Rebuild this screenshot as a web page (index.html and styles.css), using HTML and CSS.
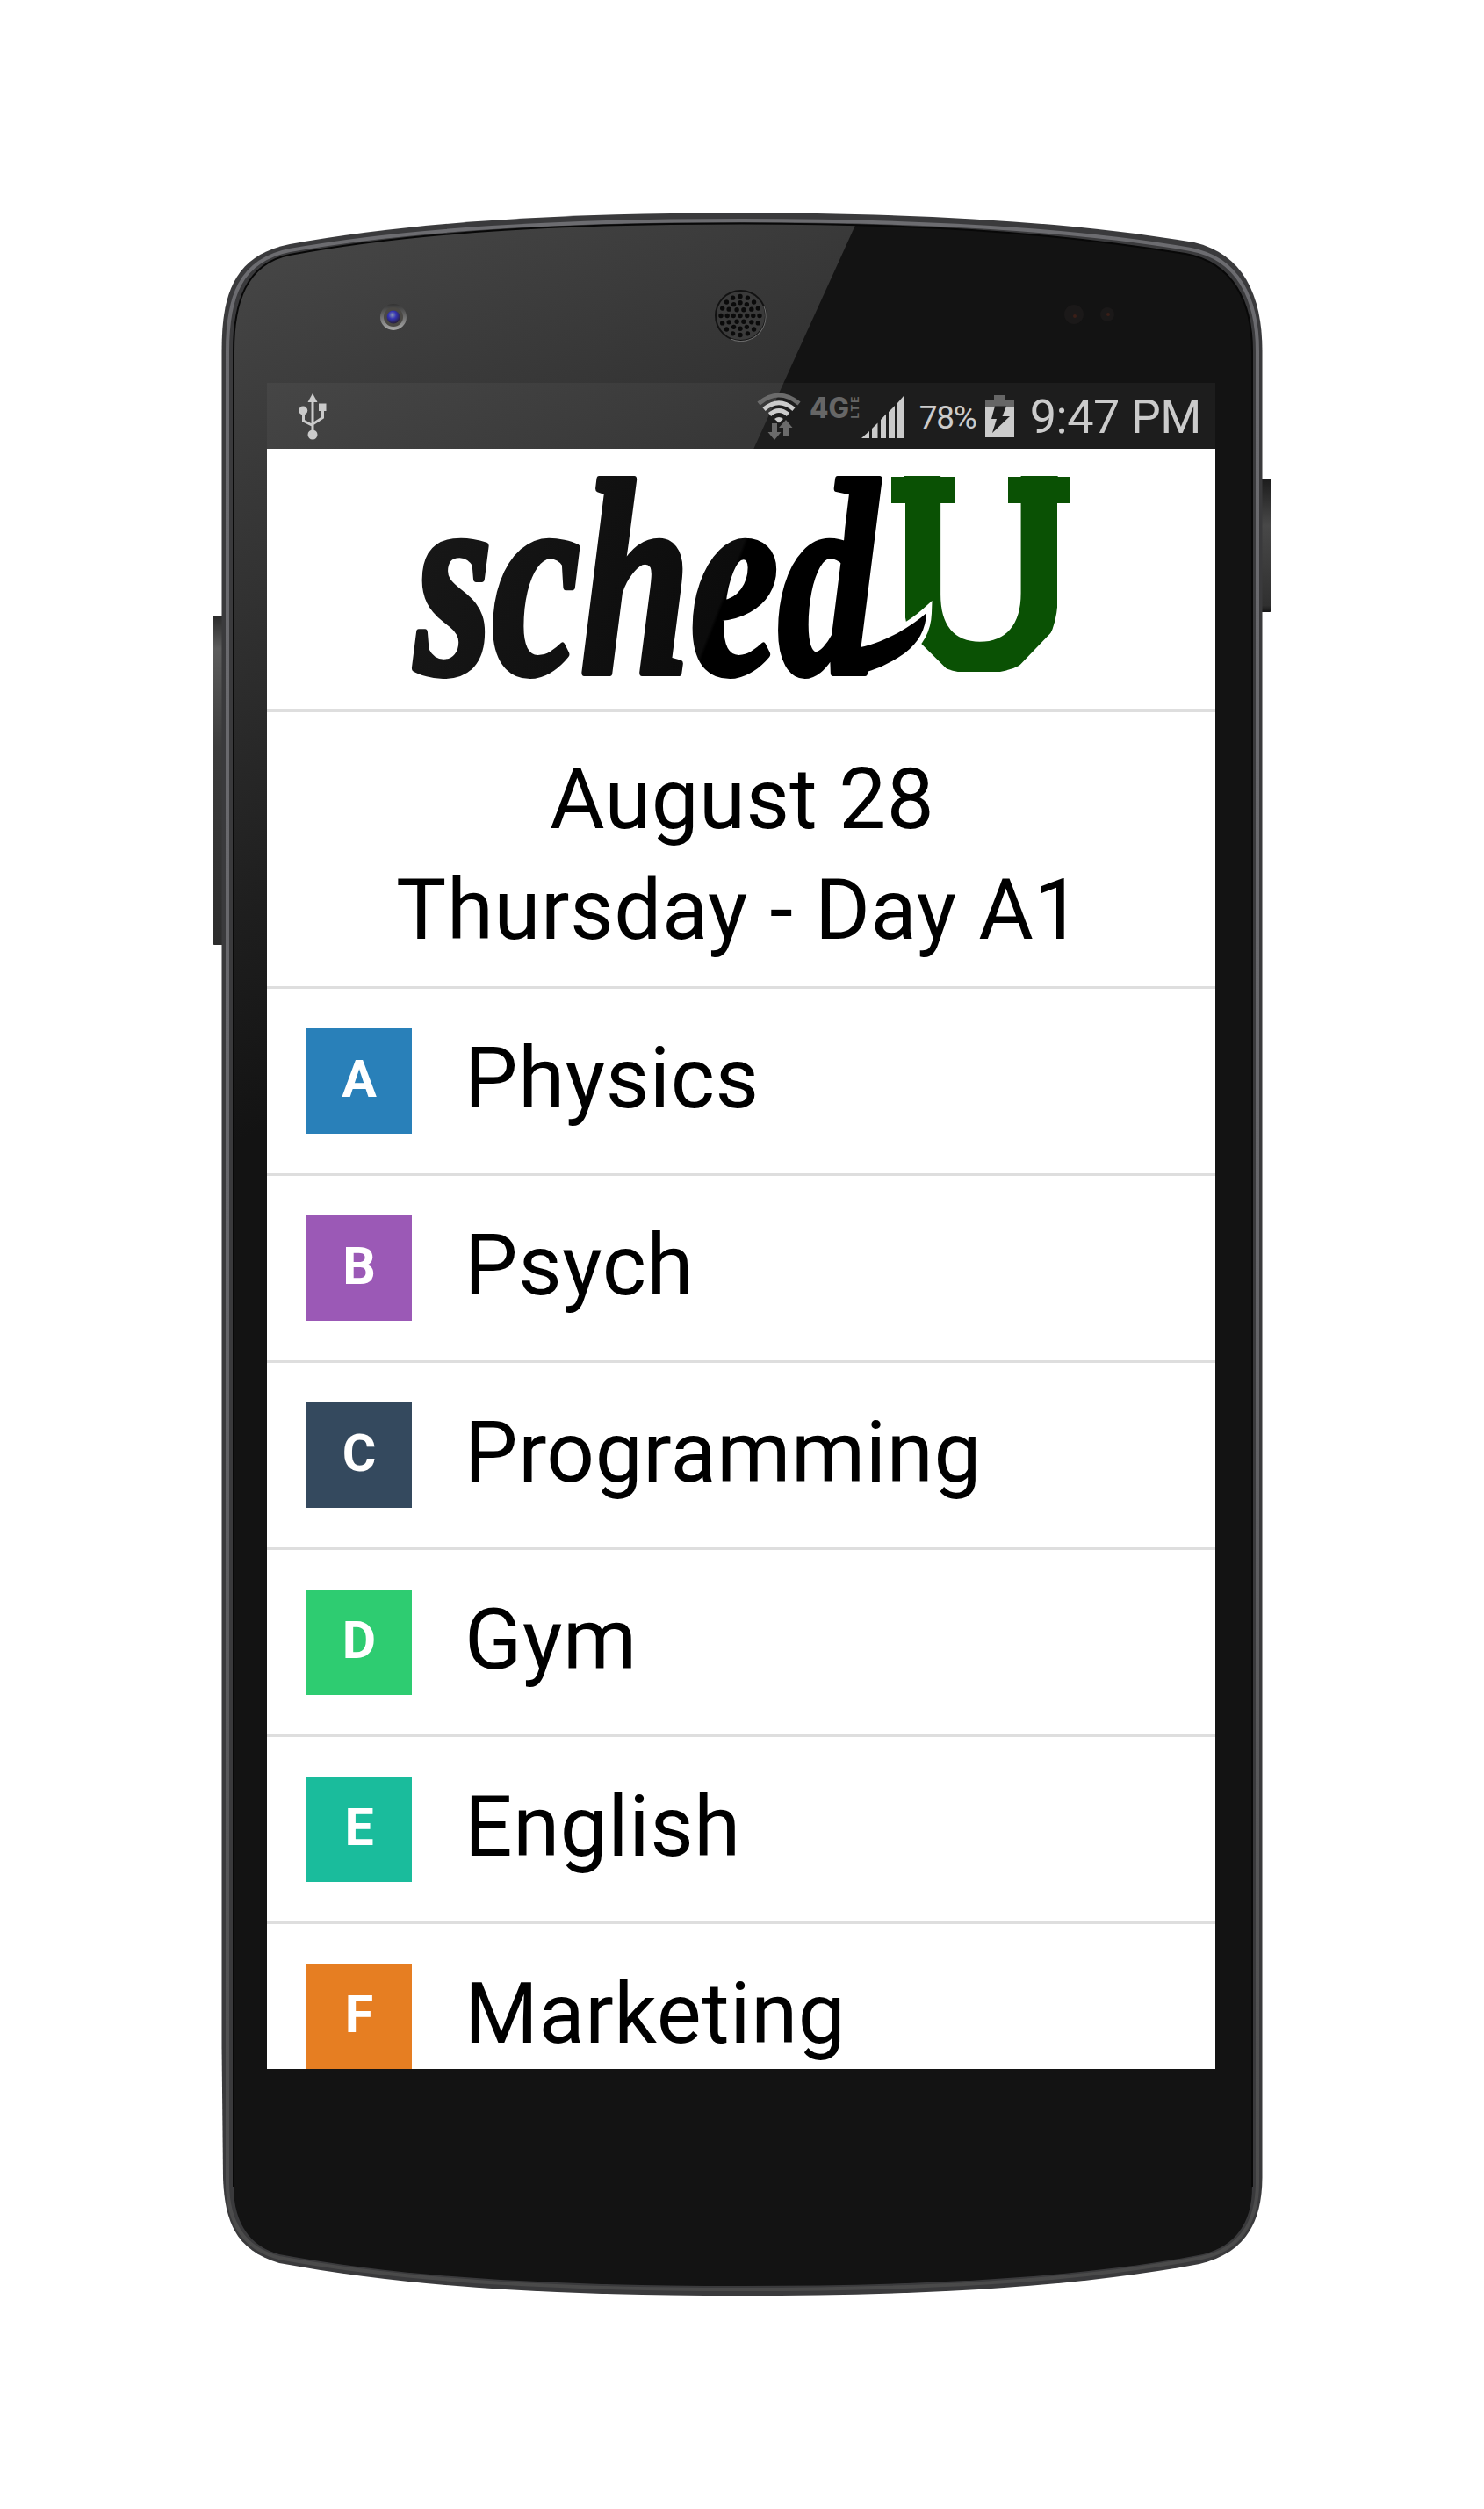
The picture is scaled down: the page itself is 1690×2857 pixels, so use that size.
FILE: index.html
```
<!DOCTYPE html>
<html lang="en">
<head>
<meta charset="utf-8">
<title>schedU</title>
<link rel="stylesheet" href="styles.css">
</head>
<body>
<main class="phone">
  <svg class="shell" viewBox="0 0 1690 2857" aria-hidden="true">
    <defs>
      <linearGradient id="glare" gradientUnits="userSpaceOnUse" x1="290" y1="280" x2="640" y2="1150">
        <stop offset="0" stop-color="#464646"/><stop offset=".35" stop-color="#343434"/><stop offset=".75" stop-color="#1e1e1e"/><stop offset="1" stop-color="#131313"/>
      </linearGradient>
      <linearGradient id="rim" x1="0" y1="0" x2="0" y2="1"><stop offset="0" stop-color="#6c6c70"/><stop offset=".5" stop-color="#66666a"/><stop offset="1" stop-color="#4a4a4a"/></linearGradient>
      <linearGradient id="key" x1="0" y1="0" x2="0" y2="1"><stop offset="0" stop-color="#2a2a2a"/><stop offset=".1" stop-color="#5c5c5c"/><stop offset=".4" stop-color="#3c3c3c"/><stop offset="1" stop-color="#2c2c2c"/></linearGradient>
      <linearGradient id="keydark" x1="0" y1="0" x2="0" y2="1"><stop offset="0" stop-color="#1c1c1c"/><stop offset=".35" stop-color="#484848"/><stop offset=".95" stop-color="#303030"/><stop offset="1" stop-color="#161616"/></linearGradient>
      <linearGradient id="lensring" x1="0" y1="0" x2="0" y2="1"><stop offset="0" stop-color="#333"/><stop offset="1" stop-color="#aaa"/></linearGradient>
      <radialGradient id="lens" cx=".42" cy=".35" r=".65"><stop offset="0" stop-color="#8a96b0"/><stop offset=".45" stop-color="#3434b4"/><stop offset="1" stop-color="#28203c"/></radialGradient>
      <clipPath id="glass"><path d="M266 400C266 345 280 300 330 290C480 262 660 254.500 845 254.500C1030 254.500 1190 263 1350 289C1405 299 1426 345 1426 400V2490C1426 2530 1408 2557 1370 2567C1220 2596 1030 2603 845 2603C660 2603 470 2596 318 2567C284 2558 266 2530 266 2490Z"/></clipPath>
    </defs>
    <rect x="242" y="701" width="14" height="375" rx="2" fill="url(#key)"/>
    <rect x="1434" y="545" width="14" height="152" rx="2" fill="url(#keydark)"/>
    <path fill="#3a3a3c" d="M252.500 400C252.500 335 266 291 330 278C490 249 680 242.500 845 242.500C1010 242.500 1200 249 1360 276C1415 289 1437.500 335 1437.500 400V2480C1437 2535 1415 2566 1366 2578C1210 2607 1030 2614 845 2614C660 2614 480 2607 318 2577C272 2563 256 2535 254 2480L252.500 2330Z"/>
    <path fill="none" stroke="url(#rim)" stroke-width="4" d="M259 400C259 339 273 296 330 285C485 257 680 251 845 251C1010 251 1200 257 1356 284C1410 294 1432 340 1432 400V2485C1432 2532 1411 2562 1368 2571C1215 2600 1030 2607 845 2607C660 2607 475 2600 318 2571C279 2561 259 2533 259 2485Z"/>
    <g clip-path="url(#glass)">
      <rect x="250" y="240" width="1200" height="2380" fill="#131313"/>
      <path fill="url(#glare)" d="M250 240H981.500L454 1400H250Z"/>
    </g>
    <path fill="none" stroke="#080808" stroke-width="2" d="M266 2490V400C266 345 280 300 330 290C480 262 660 254.500 845 254.500C1030 254.500 1190 263 1350 289C1405 299 1426 345 1426 400V2490"/>
    <ellipse cx="448" cy="361" rx="15" ry="15" fill="url(#lensring)"/><circle cx="448" cy="361" r="11" fill="#4a4844"/><circle cx="448" cy="361" r="7.500" fill="url(#lens)"/>
    <circle cx="843.500" cy="359.500" r="28.500" fill="#3a3a3a" stroke="#121212" stroke-width="2"/>
    <path d="M870 349A28.500 28.500 0 0 1 832 386" fill="none" stroke="#686868" stroke-width="1.200"/>
    <g fill="none" stroke="#0a0a0a" stroke-width="5.400" stroke-linecap="round">
      <path d="M843 359.500v.01"/>
      <circle cx="843" cy="359.500" r="7.800" pathLength="6" stroke-dasharray="0 1"/>
      <circle cx="843" cy="359.500" r="14.800" pathLength="12" stroke-dasharray="0 1"/>
      <circle cx="843" cy="359.500" r="22" pathLength="16" stroke-dasharray="0 1"/>
    </g>
    <circle cx="1223" cy="358" r="11" fill="#1b1919"/><circle cx="1224" cy="360" r="2" fill="#3a1f18"/><circle cx="1261" cy="358" r="8" fill="#1b1919"/><circle cx="1262" cy="358" r="2" fill="#3a1f18"/>
  </svg>

  <section class="screen">
    <header class="status">
      <svg class="usb" viewBox="0 0 32 54" aria-hidden="true"><g fill="#cbcbcb"><path d="M16 1l5.500 10h-11z"/><circle cx="5.200" cy="20.500" r="5"/><path d="M23 12.500h8.500v8.500H23z"/><circle cx="16" cy="48" r="5.500"/></g><path fill="none" stroke="#cbcbcb" stroke-width="3" d="M16 10v33M5.500 24v8L16 37.500M27.500 20v8.500L16 36"/></svg>
      <div class="tray">
        <svg class="wifi" viewBox="0 0 50 54" aria-hidden="true"><g fill="none"><path stroke="#6b6b6b" stroke-width="5" d="M2 12.500Q25-6.500 48 12.500"/><path stroke="#cbcbcb" stroke-width="5" d="M8 19Q25 4.500 42 19M14.500 25Q25 16 35.500 25"/></g><path fill="#cbcbcb" d="M20 30Q25 26 30 30L25 34.500Z"/><path fill="#6b6b6b" d="M17 35h6v10h4.500l-7.500 9-7.500-9H17zM30 49.500V40h-5l8-9 7.500 9H36v9.500z"/></svg>
        <svg class="lte" viewBox="0 0 56 28" aria-hidden="true"><g fill="#666" font-family="Inter, 'Liberation Sans', sans-serif" font-weight="700"><text x="-1" y="25" font-size="32" font-weight="800" textLength="45" lengthAdjust="spacingAndGlyphs">4G</text><text transform="translate(54.500 25.500) rotate(-90)" font-size="12" textLength="25">LTE</text></g></svg>
        <svg class="signal" viewBox="0 0 48 48" aria-hidden="true"><path fill="#cbcbcb" d="M0 48L9 40V48ZM12 48V37L18.500 30.500V48ZM22 48V27L28 20.500V48ZM31 48V18L38 11V48ZM41 48V8L48 0V48Z"/></svg>
        <span class="percent">78%</span>
        <svg class="battery" viewBox="0 0 33 48" aria-hidden="true"><path fill="#666" d="M10 0H22V5H33V14H0V5H10Z"/><path fill="#cbcbcb" d="M0 14H33V48H0Z"/><path fill="#1d1d1d" d="M11 12.500H24L19.500 24H28L8 43L13 27H7Z"/></svg>
        <span class="clock">9:47 PM</span>
      </div>
    </header>

    <div class="brand">
      <svg class="logo" viewBox="0 0 760 234" role="img" aria-label="schedU">
        <defs><linearGradient id="ink" gradientUnits="userSpaceOnUse" x1="0" y1="-200" x2="360" y2="-60"><stop offset="0" stop-color="#181818"/><stop offset=".95" stop-color="#0c0c0c"/><stop offset=".96" stop-color="#000"/></linearGradient>
        <clipPath id="block"><path d="M545 0H755V30H740V171L690 223H617.500L567 173V30H545Z"/></clipPath></defs>
        <g clip-path="url(#block)"><text class="u" x="0" y="0" textLength="211" lengthAdjust="spacingAndGlyphs" transform="translate(547.500 222)">U</text></g>
        <g class="slabs"><rect x="551" y="1" width="72" height="30"/><rect x="684" y="1" width="71" height="30"/></g>
        <path class="tail" d="M500 196Q522 198 558 179Q579 167 591 156Q590 184 566 202Q532 226 494 228Z"/>
        <text class="script" x="0" y="0" textLength="526" lengthAdjust="spacingAndGlyphs" transform="translate(9 224)">sched</text>
      </svg>
    </div>

    <div class="date"><p class="day">August 28</p><p class="cycle">Thursday - Day A1</p></div>

    <ul class="classes">
      <li><span class="badge blue">A</span><span class="name">Physics</span></li>
      <li><span class="badge purple">B</span><span class="name">Psych</span></li>
      <li><span class="badge navy">C</span><span class="name">Programming</span></li>
      <li><span class="badge green">D</span><span class="name">Gym</span></li>
      <li><span class="badge teal">E</span><span class="name">English</span></li>
      <li><span class="badge orange">F</span><span class="name">Marketing</span></li>
    </ul>
  </section>
</main>
</body>
</html>
```
FILE: styles.css
```
* { box-sizing: border-box; margin: 0; padding: 0; }
body { background: #fff; font-family: Roboto, sans-serif; color: #000; }
.phone { position: relative; width: 1690px; height: 2857px; padding: 436px 306px 0 304px; overflow: hidden; }
.shell { position: absolute; inset: 0; width: 1690px; height: 2857px; }
.screen { position: relative; width: 1080px; height: 1920px; overflow: hidden; display: flex; flex-direction: column; }
.status { height: 75px; flex: none; display: flex; align-items: center; justify-content: space-between; padding: 0 16px 0 36px; background: rgba(255,255,255,.045); color: #cbcbcb; }
.usb { width: 32px; height: 54px; margin-top: 1px; }
.tray { display: flex; align-items: center; }
.wifi { width: 50px; height: 54px; }
.lte { width: 56px; height: 28px; margin: 0 2px 17px 11px; overflow: visible; }
.signal { width: 48px; height: 48px; margin-top: 3px; }
.percent { font-size: 37px; line-height: 50px; margin: 5px 10px 0 18px; letter-spacing: -1.2px; }
.battery { width: 33px; height: 48px; }
.clock { font-size: 54px; line-height: 60px; margin: 3px 0 0 18px; white-space: nowrap; letter-spacing: -.5px; }
.brand { flex: none; height: 300px; background: #fff; border-bottom: 4px solid #dedede; display: flex; align-items: center; justify-content: center; }
.logo { width: 760px; height: 234px; overflow: visible; }
.u { font: 700 323px "Liberation Sans", sans-serif; fill: #0a5104; }
.slabs { fill: #0a5104; }
.script { font: italic 700 317px "Liberation Serif", serif; fill: url(#ink); stroke: url(#ink); stroke-width: 8px; stroke-linejoin: round; }
.tail { fill: #000; stroke: #fff; stroke-width: 12px; paint-order: stroke; }
.date { flex: none; height: 315px; background: #fff; border-bottom: 3px solid #dedede; padding-top: 36px; text-align: center; font-size: 96px; line-height: 126px; white-space: nowrap; }
.day { letter-spacing: .4px; padding-left: 2px; }
.cycle { letter-spacing: .6px; padding-right: 5px; }
.classes { flex: none; list-style: none; background: #fff; }
.classes li { display: flex; align-items: center; height: 213px; padding: 0 45px; border-bottom: 3px solid #dedede; }
.badge { width: 120px; height: 120px; padding-bottom: 5px; display: flex; align-items: center; justify-content: center; color: #fff; font-size: 59px; font-weight: 700; }
.name { font-size: 96px; line-height: 120px; margin-left: 60px; padding-bottom: 6px; letter-spacing: .6px; }
.blue { background: #2980b9; }
.purple { background: #9b59b6; }
.navy { background: #34495e; }
.green { background: #2ecc71; }
.teal { background: #1abc9c; }
.orange { background: #e67e22; }
```
